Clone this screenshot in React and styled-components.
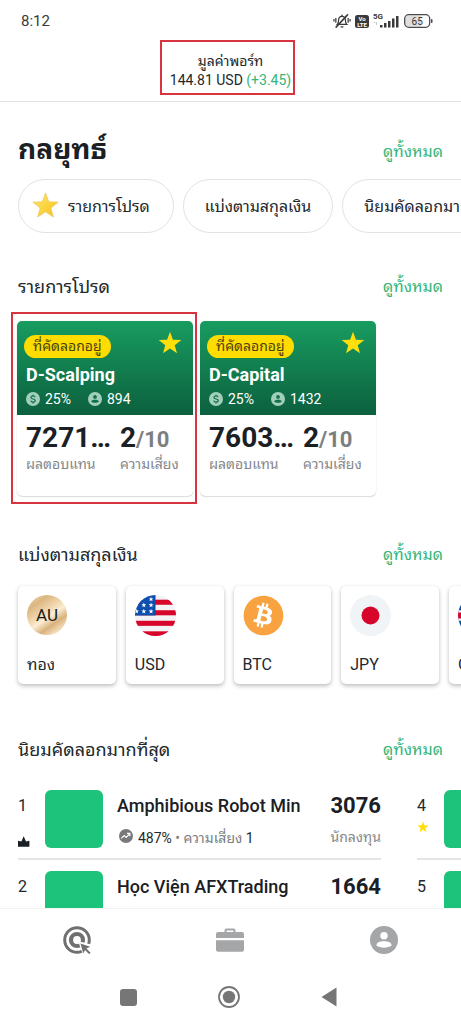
import React from "react";
import styled, { createGlobalStyle } from "styled-components";
import { FaBitcoin } from "react-icons/fa";

const GlobalStyle = createGlobalStyle`
  * { box-sizing: border-box; }
  body {
    margin: 0;
    background: #fff;
    color: #22282c;
    font-family: Roboto, "Noto Sans Thai Looped", "Noto Sans Thai", "Noto Sans", sans-serif;
  }
  h1, h2, h3, p, ul, ol, dl, dd, dt { margin: 0; padding: 0; }
  ul, ol { list-style: none; }
  button { font: inherit; color: inherit; background: none; border: 0; padding: 0; cursor: pointer; }
  svg { display: block; flex: none; }
`;

const Screen = styled.div`
  height: 100vh;
  display: flex;
  flex-direction: column;
`;

const StatusBar = styled.div`
  flex: none;
  height: 42px;
  padding: 0 28px 0 21px;
  display: flex;
  align-items: center;
  justify-content: space-between;
  font-size: 15px;
  color: #3a3a3a;
`;

const StatusIcons = styled.div`
  display: flex;
  align-items: center;
  gap: 4px;
`;

const Header = styled.header`
  flex: none;
  height: 60px;
  padding-top: 10px;
  border-bottom: 1px solid #e2e2e2;
  display: flex;
  justify-content: center;
  align-items: flex-start;
`;

const Portfolio = styled.div`
  position: relative;
  text-align: center;
  font-size: 14px;
  line-height: 19px;
`;

const Gain = styled.span`
  color: #35b579;
`;

const Highlight = styled.span`
  position: absolute;
  inset: ${(p) => p.$inset};
  border: 2px solid #d8343f;
  pointer-events: none;
`;

const Content = styled.main`
  flex: 1;
  min-height: 0;
  overflow: hidden auto;
  scrollbar-width: none;
`;

const SectionHead = styled.div`
  display: flex;
  align-items: ${(p) => (p.$bottom ? "flex-end" : "center")};
  justify-content: space-between;
  height: ${(p) => (p.$bottom ? 30 : 28)}px;
  margin-top: ${(p) => p.$top}px;
  padding: 0 18px;
`;

const PageTitle = styled.h1`
  align-self: flex-start;
  font-size: 28px;
  line-height: 28px;
  font-weight: 700;
  color: #1a2024;
`;

const SectionTitle = styled.h2`
  font-size: 18px;
  line-height: 28px;
  font-weight: 400;
`;

const SeeAll = styled.a`
  font-size: 16px;
  line-height: 28px;
  color: #35b579;
  text-decoration: none;
`;

const Scroller = styled.div`
  display: flex;
  gap: ${(p) => p.$gap}px;
  padding: ${(p) => p.$pad};
  overflow: auto hidden;
  scrollbar-width: none;
`;

const Chip = styled.button`
  flex: none;
  height: 54px;
  padding: 0 ${(p) => (p.$icon ? "23px 2px 13px" : "21px 2px")};
  border: 1px solid #e2e2e2;
  border-radius: 27px;
  display: flex;
  align-items: center;
  gap: 9px;
  font-size: 16px;
  white-space: nowrap;
`;

const Strategy = styled.article`
  position: relative;
  flex: none;
  width: 176px;
  height: 175px;
  border-radius: 5px;
  box-shadow: 0 0 1px rgba(0, 0, 0, 0.2), 0 1px 1px rgba(0, 0, 0, 0.12);
`;

const StrategyTop = styled.div`
  height: 94px;
  padding: 10px 9px 0;
  border-radius: 5px 5px 0 0;
  background: linear-gradient(#189c60, #0c603e);
  color: #fff;
`;

const TopLine = styled.div`
  display: flex;
  justify-content: space-between;
  align-items: flex-start;
  height: 32px;
  margin: 0 2px 0 -2px;
`;

const Badge = styled.span`
  height: 23px;
  line-height: 23px;
  margin-top: 4px;
  padding: 0 9px;
  border-radius: 12px;
  background: #ffdc00;
  color: #4b4310;
  font-size: 14px;
`;

const StrategyName = styled.h3`
  font-size: 18px;
  line-height: 24px;
  font-weight: 700;
`;

const Facts = styled.div`
  display: flex;
  gap: 17px;
  margin-top: 4px;
`;

const Fact = styled.span`
  display: flex;
  align-items: center;
  gap: 5px;
  font-size: 14px;
  line-height: 16px;
`;

const StrategyStats = styled.dl`
  display: grid;
  grid-template-columns: 82px 1fr;
  column-gap: 12px;
  padding: 7px 9px 0;
`;

const Stat = styled.div`
  display: flex;
  flex-direction: column-reverse;
`;

const StatValue = styled.dd`
  height: 32px;
  font-size: 28px;
  line-height: 32px;
  font-weight: 700;
  color: #1a2024;
  white-space: nowrap;
`;

const OutOf = styled.span`
  font-size: 22px;
  line-height: 22px;
  color: #7c7e80;
`;

const StatLabel = styled.dt`
  font-size: 14px;
  line-height: 20px;
  color: #858789;
  white-space: nowrap;
`;

const Currency = styled.a`
  flex: 0 0 23%;
  height: 98px;
  padding: 9px 9px 8px;
  border-radius: 5px;
  box-shadow: 0 2px 4px rgba(0, 0, 0, 0.25), 0 0 1px rgba(0, 0, 0, 0.1);
  display: flex;
  flex-direction: column;
  justify-content: space-between;
  color: inherit;
  text-decoration: none;
  font-size: 16px;
  line-height: 22px;
`;

const Gold = styled.span`
  width: 40px;
  height: 40px;
  border-radius: 50%;
  background: linear-gradient(145deg, #f3dcb8 0%, #dcb681 22%, #f0d6ae 42%, #fbecd2 55%, #d9b27c 70%, #f2dcb9 84%, #d2aa74 100%);
  display: flex;
  align-items: center;
  justify-content: center;
  color: #1b1b1b;
  font-size: 17px;
`;

const Board = styled.ol`
  flex: 0 0 calc(100% - 62px);
`;

const Leader = styled.li`
  display: grid;
  grid-template-columns: 27px 58px 1fr auto;
  height: 70px;
  margin-bottom: 11px;
  border-bottom: 2px solid #e4e4e4;
`;

const Rank = styled.div`
  font-size: 16px;
  line-height: 32px;
`;

const Marker = styled.div`
  height: 20px;
  display: flex;
  align-items: ${(p) => (p.$low ? "flex-end" : "flex-start")};
  margin-top: ${(p) => (p.$low ? 5 : -1)}px;
`;

const Avatar = styled.div`
  width: 58px;
  height: 58px;
  border-radius: 6px;
  background: #1dc27b;
`;

const Info = styled.div`
  min-width: 0;
  padding-left: 14px;
`;

const LeaderName = styled.h3`
  font-size: 18px;
  line-height: 32px;
  font-weight: 500;
  color: #1a2024;
  white-space: nowrap;
`;

const Meta = styled.div`
  display: flex;
  align-items: center;
  gap: 5px;
  padding-left: 2px;
  height: 28px;
  font-size: 14px;
  white-space: nowrap;
`;

const Muted = styled.span`
  color: #7c7e80;
`;

const Count = styled.div`
  font-size: 22px;
  line-height: 32px;
  font-weight: 700;
  color: #1a2024;
`;

const CountLabel = styled.div`
  font-size: 14px;
  line-height: 30px;
  color: #858789;
`;

const TabBar = styled.nav`
  flex: none;
  height: 64px;
  padding-bottom: 2px;
  border-top: 1px solid #f2f2f2;
  display: grid;
  grid-template-columns: repeat(3, 1fr);
`;

const Tab = styled.button`
  display: flex;
  align-items: center;
  justify-content: center;
  && { color: ${(p) => (p.$active ? "#707070" : "#a5a6a8")}; }
`;

const SystemBar = styled.div`
  flex: none;
  height: 52px;
  padding: 0 4px 2px 0;
  display: flex;
  justify-content: center;
  gap: 78px;
  color: #767676;
`;

const SystemButton = styled.button`
  width: 22px;
  display: flex;
  align-items: center;
  justify-content: center;
`;

const starPath = "M12 0.8l2.9 7.9 8.4 0.3-6.6 5.2 2.3 8.1L12 17.6l-7 4.7 2.3-8.1L0.7 9l8.4-0.3z";

const Star = ({ size, fill = "#ffdf0a" }) => (
  <svg width={size} height={size} viewBox="0 0 24 24" aria-hidden="true">
    <path d={starPath} fill={fill} />
  </svg>
);

const GlossyStar = () => (
  <svg width="27" height="27" viewBox="0 0 24 24" aria-hidden="true">
    <defs>
      <linearGradient id="gloss" x1="0" y1="0" x2="1" y2="1">
        <stop offset="0" stopColor="#ffe680" />
        <stop offset="0.55" stopColor="#fbd43b" />
        <stop offset="1" stopColor="#f0b93a" />
      </linearGradient>
    </defs>
    <path d={starPath} fill="url(#gloss)" stroke="#eac353" strokeWidth="0.6" strokeLinejoin="round" />
  </svg>
);

const Person = ({ size, cut }) => (
  <svg width={size} height={size} viewBox="0 0 28 28" aria-hidden="true">
    <circle cx="14" cy="14" r="14" fill="currentColor" />
    <circle cx="14" cy="9.8" r="3.7" fill={cut} />
    <path d="M6.4 19.6c0-3 3.4-4.3 7.6-4.3s7.6 1.3 7.6 4.3c-2 1.5-4.6 2.1-7.6 2.1s-5.6-.6-7.6-2.1z" fill={cut} />
  </svg>
);

const Tint = styled.span`
  color: #a3cfba;
`;

const Coin = () => (
  <svg width="14" height="14" viewBox="0 0 24 24" aria-hidden="true">
    <circle cx="12" cy="12" r="12" fill="currentColor" />
    <path d="M15.6 8.8c-.5-1.4-1.8-2-3.6-2-2 0-3.5 1-3.5 2.6 0 3.6 7.3 1.6 7.3 5.2 0 1.7-1.6 2.7-3.7 2.7-2 0-3.5-.9-3.900-2.500M12 4.500v2.400M12 17v2.600" fill="none" stroke="#10704a" strokeWidth="2.100" />
  </svg>
);

const Trend = () => (
  <svg width="14" height="14" viewBox="0 0 24 24" aria-hidden="true">
    <circle cx="12" cy="12" r="12" fill="#77797b" />
    <path d="M4 16.200l4.800-4.800 3.400 3.200 6-6.400M13.600 7.600h5v5" fill="none" stroke="#fff" strokeWidth="2" />
  </svg>
);

const Crown = () => (
  <svg width="12" height="11" viewBox="0 0 12 11" aria-hidden="true">
    <path d="M0 4.800L3.400 5.400 5.700 0.200 8 5.400 11.400 4.800V10.800H0z" fill="#1a2024" />
  </svg>
);

const UsFlag = () => (
  <svg width="41" height="41" viewBox="0 0 42 42" aria-hidden="true">
    <defs>
      <clipPath id="usClip"><circle cx="21" cy="21" r="21" /></clipPath>
    </defs>
    <g clipPath="url(#usClip)">
      <rect width="42" height="42" fill="#f3f3f5" />
      {[4.8, 15.6, 26.4, 37.2].map((y) => (
        <rect key={y} y={y} width="42" height="5.2" fill="#d8052b" />
      ))}
      <rect width="21" height="21" fill="#0d4fae" />
      {[[16.4, 4.2], [9, 10.2], [16.4, 10.2], [1.6, 16.6], [9, 16.6], [16.4, 16.6]].map(([x, y]) => (
        <path key={`${x}-${y}`} transform={`translate(${x - 2.6} ${y - 2.6}) scale(0.22)`} d={starPath} fill="#fff" />
      ))}
    </g>
  </svg>
);

const Bitcoin = styled(FaBitcoin)`
  width: 41px;
  height: 41px;
  border-radius: 50%;
  color: #f9a340;
`;

const JpFlag = () => (
  <svg width="41" height="41" viewBox="0 0 42 42" aria-hidden="true">
    <circle cx="21" cy="21" r="21" fill="#f1f4f6" />
    <circle cx="21" cy="21" r="9.2" fill="#d8052b" />
  </svg>
);

const GbFlag = () => (
  <svg width="41" height="41" viewBox="0 0 42 42" aria-hidden="true">
    <defs>
      <clipPath id="gbClip"><circle cx="21" cy="21" r="21" /></clipPath>
    </defs>
    <g clipPath="url(#gbClip)">
      <rect width="42" height="42" fill="#0d4fae" />
      <path d="M0 0l42 42M42 0L0 42" stroke="#f3f3f5" strokeWidth="7" />
      <path d="M0 0l42 42M42 0L0 42" stroke="#d8052b" strokeWidth="2.5" />
      <path d="M21 0v42M0 21h42" stroke="#f3f3f5" strokeWidth="11" />
      <path d="M21 0v42M0 21h42" stroke="#d8052b" strokeWidth="6" />
    </g>
  </svg>
);

const BellOff = () => (
  <svg width="18" height="16" viewBox="0 0 19 16" fill="none" stroke="#3a3a3a" strokeWidth="1.300" aria-hidden="true">
    <path d="M4.600 11.600c1-.9 1.300-2 1.300-4.300C5.900 4.600 7.400 3 9.500 3s3.600 1.600 3.600 4.300c0 2.300.4 3.400 1.400 4.300zM8 14.200h3M8.700 2h1.600" />
    <path d="M2.800 15L15.800 1" strokeWidth="1.600" />
    <path d="M3 4.800v5M1 6v2.600M16 4.800v5M18 6v2.600" />
  </svg>
);

const VoLte = () => (
  <svg width="14" height="13" viewBox="0 0 14 13" fontFamily="Roboto, sans-serif" fontWeight="700" aria-label="VoLTE">
    <rect width="14" height="13" rx="2.5" fill="#3a3a3a" />
    <text x="7" y="6" fontSize="6" fill="#fff" textAnchor="middle">Vo</text>
    <text x="7" y="11.5" fontSize="6" fill="#fff" textAnchor="middle">LTE</text>
  </svg>
);

const Signal = () => (
  <svg width="27" height="16" viewBox="0 0 27 16" fill="#3a3a3a" fontFamily="Roboto, sans-serif" aria-label="5G">
    <text x="0" y="6" fontSize="8" fontWeight="700">5G</text>
    <path d="M1 9.5h1.5M3.5 9v3" stroke="#bbb" strokeWidth="0.8" />
    <rect x="7" y="12" width="2.5" height="2.5" />
    <rect x="11" y="10" width="2.5" height="4.5" />
    <rect x="15" y="8" width="2.5" height="6.5" />
    <rect x="19" y="5.5" width="2.5" height="9" />
    <rect x="23" y="3" width="2.5" height="11.5" />
  </svg>
);

const Battery = () => (
  <svg width="29" height="14" viewBox="0 0 29 14" fontFamily="Roboto, sans-serif" aria-label="65%">
    <path d="M4 1.5h13v11H4a2.5 2.5 0 0 1-2.5-2.5V4A2.5 2.5 0 0 1 4 1.5z" fill="#dedede" />
    <rect x="0.7" y="0.7" width="25" height="12.6" rx="4" fill="none" stroke="#4a4a4a" strokeWidth="1.3" />
    <rect x="27" y="5" width="1.5" height="4" rx="0.7" fill="#4a4a4a" />
    <text x="13.2" y="10.5" fontSize="10" fill="#3a3a3a" textAnchor="middle">65</text>
  </svg>
);

const TargetIcon = () => (
  <svg width="28" height="28" viewBox="0 0 28 28" fill="none" aria-hidden="true">
    <circle cx="14" cy="14" r="12.3" stroke="currentColor" strokeWidth="3" />
    <circle cx="14" cy="14" r="6" stroke="currentColor" strokeWidth="4.2" />
    <path d="M15 15l13 3.500v10h-8z" fill="#fff" />
    <path d="M17.500 17.500l9.700 3.200-3.800 1.900 4.200 4.200-1.400 1.400-4.200-4.200-1.700 3.400z" fill="currentColor" />
  </svg>
);

const BriefcaseIcon = () => (
  <svg width="28" height="24" viewBox="0 0 28 24" fill="currentColor" aria-hidden="true">
    <path d="M2 4h6.500V2.300Q8.500.5 10.300.5h7.400q1.800 0 1.800 1.800V4H26q2 0 2 2v4H0V6q0-2 2-2zm8.500 0h7V2.500h-7z" />
    <path d="M0 12.300h28v9.500q0 2-2 2H2q-2 0-2-2z" />
  </svg>
);

const strategies = [
  { name: "D-Scalping", fee: "25%", followers: "894", gain: "7271…", risk: 2, highlighted: true },
  { name: "D-Capital", fee: "25%", followers: "1432", gain: "7603…", risk: 2 },
];

const currencies = [
  { label: "ทอง", icon: <Gold>AU</Gold> },
  { label: "USD", icon: <UsFlag /> },
  { label: "BTC", icon: <Bitcoin /> },
  { label: "JPY", icon: <JpFlag /> },
  { label: "GBP", icon: <GbFlag /> },
];

const boards = [
  [
    { rank: 1, name: "Amphibious Robot Min", gain: "487%", risk: 1, count: "3076", marker: "crown" },
    { rank: 2, name: "Học Viện AFXTrading", count: "1664" },
  ],
  [
    { rank: 4, marker: "star" },
    { rank: 5 },
  ],
];

const Section = ({ title, top }) => (
  <SectionHead $top={top}>
    <SectionTitle>{title}</SectionTitle>
    <SeeAll href="#all">ดูทั้งหมด</SeeAll>
  </SectionHead>
);

const StrategyCard = ({ name, fee, followers, gain, risk, highlighted }) => (
  <Strategy>
    <StrategyTop>
      <TopLine>
        <Badge>ที่คัดลอกอยู่</Badge>
        <Star size={24} />
      </TopLine>
      <StrategyName>{name}</StrategyName>
      <Facts>
        <Fact><Tint><Coin /></Tint>{fee}</Fact>
        <Fact><Tint><Person size={14} cut="#10704a" /></Tint>{followers}</Fact>
      </Facts>
    </StrategyTop>
    <StrategyStats>
      <Stat>
        <StatLabel>ผลตอบแทน</StatLabel>
        <StatValue>{gain}</StatValue>
      </Stat>
      <Stat>
        <StatLabel>ความเสี่ยง</StatLabel>
        <StatValue>{risk}<OutOf>/10</OutOf></StatValue>
      </Stat>
    </StrategyStats>
    {highlighted && <Highlight $inset="-9px -4px -8px -6px" />}
  </Strategy>
);

const LeaderRow = ({ rank, name, gain, risk, count, marker }) => (
  <Leader>
    <div>
      <Rank>{rank}</Rank>
      {marker === "crown" && <Marker $low><Crown /></Marker>}
      {marker === "star" && <Marker><Star size={12} /></Marker>}
    </div>
    <Avatar />
    <Info>
      {name && <LeaderName>{name}</LeaderName>}
      {gain && (
        <Meta>
          <Trend />
          <span>{gain} <Muted>• ความเสี่ยง</Muted> {risk}</span>
        </Meta>
      )}
    </Info>
    {count && (
      <div>
        <Count>{count}</Count>
        <CountLabel>นักลงทุน</CountLabel>
      </div>
    )}
  </Leader>
);

export default function App() {
  return (
    <Screen>
      <GlobalStyle />
      <StatusBar>
        <time>8:12</time>
        <StatusIcons>
          <BellOff />
          <VoLte />
          <Signal />
          <Battery />
        </StatusIcons>
      </StatusBar>
      <Header>
        <Portfolio>
          <p>มูลค่าพอร์ท</p>
          <p>144.81 USD <Gain>(+3.45)</Gain></p>
          <Highlight $inset="-12px -4px -5px -10px" />
        </Portfolio>
      </Header>
      <Content>
        <SectionHead $top={34} $bottom>
          <PageTitle>กลยุทธ์</PageTitle>
          <SeeAll href="#all">ดูทั้งหมด</SeeAll>
        </SectionHead>
        <Scroller $gap={9} $pad="13px 18px 0">
          <Chip $icon><GlossyStar />รายการโปรด</Chip>
          <Chip>แบ่งตามสกุลเงิน</Chip>
          <Chip>นิยมคัดลอกมากที่สุด</Chip>
        </Scroller>

        <Section title="รายการโปรด" top={40} />
        <Scroller $gap={7} $pad="20px 17px 8px">
          {strategies.map((s) => <StrategyCard key={s.name} {...s} />)}
        </Scroller>

        <Section title="แบ่งตามสกุลเงิน" top={37} />
        <Scroller $gap={10} $pad="17px 18px 8px">
          {currencies.map((c) => (
            <Currency key={c.label} href={`#${c.label}`}>{c.icon}{c.label}</Currency>
          ))}
        </Scroller>

        <Section title="นิยมคัดลอกมากที่สุด" top={44} />
        <Scroller $gap={36} $pad="26px 18px 0">
          {boards.map((rows) => (
            <Board key={rows[0].rank}>
              {rows.map((r) => <LeaderRow key={r.rank} {...r} />)}
            </Board>
          ))}
        </Scroller>
      </Content>
      <TabBar>
        <Tab $active aria-label="Strategies"><TargetIcon /></Tab>
        <Tab aria-label="Portfolio"><BriefcaseIcon /></Tab>
        <Tab aria-label="Account"><Person size={28} cut="#fff" /></Tab>
      </TabBar>
      <SystemBar>
        <SystemButton aria-label="Recent apps">
          <svg width="17" height="17" viewBox="0 0 17 17"><rect width="17" height="17" rx="3" fill="currentColor" /></svg>
        </SystemButton>
        <SystemButton aria-label="Home">
          <svg width="22" height="22" viewBox="0 0 22 22">
            <circle cx="11" cy="11" r="10" fill="none" stroke="currentColor" strokeWidth="1.8" />
            <circle cx="11" cy="11" r="6.2" fill="currentColor" />
          </svg>
        </SystemButton>
        <SystemButton aria-label="Back">
          <svg width="16" height="20" viewBox="0 0 16 20"><path d="M0.5 10L15.5 0.5v19z" fill="currentColor" /></svg>
        </SystemButton>
      </SystemBar>
    </Screen>
  );
}
